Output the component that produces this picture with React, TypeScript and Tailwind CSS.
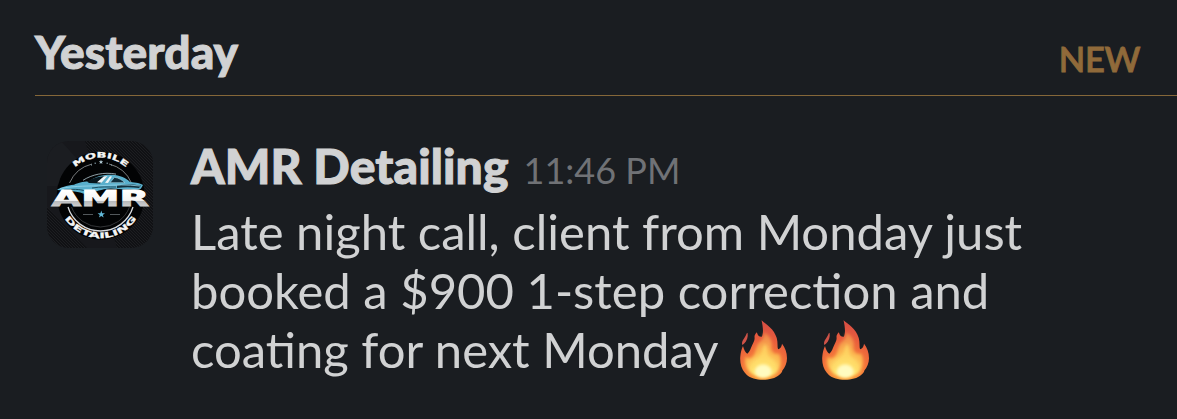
type Message = {
  author: string;
  time: string;
  lines: string[];
};

const message: Message = {
  author: 'AMR Detailing',
  time: '11:46 PM',
  lines: ['Late night call, client from Monday just', 'booked a $900 1-step correction and', 'coating for next Monday'],
};

function Fire({ id, className }: { id: string; className?: string }) {
  return (
    <svg viewBox="30 30 142 180" className={`h-[60px] w-[47px] shrink-0 ${className ?? ''}`} role="img" aria-label="fire">
      <defs>
        <radialGradient id={`${id}-outer`} gradientUnits="userSpaceOnUse" cx="100" cy="190" r="150">
          <stop offset="0" stopColor="#ffb43c" />
          <stop offset="0.4" stopColor="#f4793a" />
          <stop offset="0.7" stopColor="#e85c3c" />
          <stop offset="1" stopColor="#d94f43" />
        </radialGradient>
        <radialGradient id={`${id}-inner`} gradientUnits="userSpaceOnUse" cx="100" cy="190" r="125">
          <stop offset="0" stopColor="#ffffc8" />
          <stop offset="0.2" stopColor="#fff07a" />
          <stop offset="0.5" stopColor="#fcb850" />
          <stop offset="1" stopColor="#ee7c48" />
        </radialGradient>
        <filter id={`${id}-soft`} x="-30%" y="-30%" width="160%" height="160%">
          <feGaussianBlur stdDeviation="5" />
        </filter>
      </defs>
      <path
        fill={`url(#${id}-outer)`}
        d="M95 30C108 42 133 55 141 84C145 98 142 111 145 118C153 116 156 108 157 101C166 113 172 126 172 145C172 160 166 172 158 182C157 187 154 191 149 195C137 206 119 210 99 210C79 210 61 205 50 195L44 188C34 176 29 158 31 139C32 127 35 117 39 108C42 119 46 127 52 131C60 125 62 116 67 105C71 96 75 91 74 82C73 76 76 71 81 66C83 76 89 81 96 80C102 68 99 47 95 30Z"
      />
      <path fill="#cf5348" d="M53 68C55 81 51 93 42 101L37 105C33 90 45 86 50 70Z" />
      <path
        filter={`url(#${id}-soft)`}
        fill={`url(#${id}-inner)`}
        d="M102 67C121 75 128 93 125 110C123 124 132 134 148 131C157 145 155 174 141 188C129 203 75 203 61 187C47 174 42 156 47 140C55 149 68 145 74 132C81 116 79 104 91 95C101 87 103 77 102 67Z"
      />
      <path
        filter={`url(#${id}-soft)`}
        fill="#ffdc68"
        opacity="0.7"
        d="M106 101C117 116 109 130 120 145C132 157 141 157 137 173C129 201 73 203 65 177C61 160 79 158 88 142C97 127 96 113 106 101Z"
      />
      <ellipse cx="100" cy="184" rx="25" ry="20" fill="#fffbc0" filter={`url(#${id}-soft)`} />
    </svg>
  );
}

function Avatar() {
  return (
    <svg viewBox="0 0 106 107" className="h-[107px] w-[106px] shrink-0 rounded-[22px]" role="img" aria-label="AMR Mobile Detailing">
      <defs>
        <pattern id="carbon" width="3" height="3" patternUnits="userSpaceOnUse">
          <rect width="3" height="3" fill="#101114" />
          <path d="M0 0L3 3" stroke="#222427" strokeWidth="0.7" />
        </pattern>
        <linearGradient id="silver" x1="0" y1="0" x2="0" y2="1">
          <stop offset="0.2" stopColor="#ffffff" />
          <stop offset="0.58" stopColor="#f5f5f5" />
          <stop offset="0.62" stopColor="#b9babc" />
          <stop offset="1" stopColor="#dedede" />
        </linearGradient>
        <path id="arc-top" d="M15.7 54.7A38 38 0 0 1 91.7 54.7" />
        <path id="arc-bottom" d="M11.2 54.7A42.5 42.5 0 0 0 96.2 54.7" />
      </defs>
      <rect width="106" height="107" fill="#17181c" />
      <path d="M38 0H106V107H70Z" fill="url(#carbon)" />
      <path d="M0 0H14L32 20L10 45H0Z" fill="#1b1d21" />
      <path d="M0 66L40 107H0Z" fill="url(#carbon)" />
      <circle cx="53.7" cy="54.7" r="44" fill="#020304" />
      <path d="M22.5 42A33 33 0 0 1 45 23M62 23A33 33 0 0 1 84.5 42" fill="none" stroke="#96999c" strokeWidth="0.8" />
      <path d="M21 66A34 34 0 0 0 86 66" fill="none" stroke="#d7dadd" strokeWidth="1.3" />
      <path d="M24.5 66A31 31 0 0 0 82.5 66" fill="none" stroke="#66696c" strokeWidth="0.5" />
      <text className="font-['DejaVu_Sans'] font-bold" fill="#f5f5f5" stroke="#f5f5f5" strokeWidth="0.3" fontSize="7.6">
        <textPath href="#arc-top" startOffset="31.5" textLength="56" lengthAdjust="spacingAndGlyphs">
          MOBILE
        </textPath>
      </text>
      <text className="font-['DejaVu_Sans'] font-bold" fill="#f5f5f5" stroke="#f5f5f5" strokeWidth="0.3" fontSize="7.8">
        <textPath href="#arc-bottom" startOffset="24" textLength="85" lengthAdjust="spacingAndGlyphs">
          DETAILING
        </textPath>
      </text>
      <path d="M54 18.7L54.6 20.2L56.2 20.3L55 21.3L55.4 23L54 22.1L52.6 23L53 21.3L51.8 20.3L53.4 20.2Z" fill="#b2cbd5" />
      <path d="M47.5 22.2H49M59.5 22.2H61M44 24H45M64 24H65" stroke="#8ca6b0" />
      {/* car body */}
      <path
        d="M10 49C13 46.5 20 44.5 27 43.8C31 41.8 35 40.8 42 40.3C48 36 54 33.5 65 33.7C73 34 79 37 83 41C89 41.4 94 42.5 96 44L94 47.5C91 50 86 48 82 48.5C74 49 66 46.5 57 48.2C48 50 44 54 36 52.4C29 50 21 50 10 49Z"
        fill="#59afcc"
      />
      <path d="M40 40.5C47 36.7 51 35.2 60 35.2L53 42.5L42 42Z" fill="#07151c" />
      <path d="M50 41.3L57 35.3L60.5 35L54.5 41.8ZM58 41.8L63 35.2L65 35.4L61 42Z" fill="#edf4f6" />
      <path d="M63 41.7L67.5 36.3C72 37 75 39 78 41.7Z" fill="#102e3b" stroke="#a8dced" strokeWidth="0.6" />
      <path d="M70 44.5C78 43 87 43 94 44.5L92 47C84 46 77 46 70 47Z" fill="#12303c" />
      <path d="M13 47.5C29 44.5 43 45.3 57 44.5C69 43.8 80 43.5 93 45" fill="none" stroke="#9ad7eb" strokeWidth="0.8" />
      <path d="M17 49C25 48 33 48 38 50M45 47C54 45.5 62 46 69 46" fill="none" stroke="#174354" strokeWidth="0.9" />
      <path d="M36 39.3C45 33.5 57 30.8 69 33.1" fill="none" stroke="#cde7ef" strokeWidth="0.7" />
      <text
        x="4.5"
        y="64.5"
        textLength="97.5"
        lengthAdjust="spacingAndGlyphs"
        className="font-['DejaVu_Sans'] font-bold"
        fill="url(#silver)"
        stroke="url(#silver)"
        strokeWidth="0.8"
        fontSize="20.8"
      >
        AMR
      </text>
      <path d="M54.3 69.6L55.2 72.2H58L55.8 73.9L56.7 76.6L54.3 75L51.9 76.6L52.8 73.9L50.6 72.2H53.4Z" fill="#62b9d8" />
      <path d="M36 73.5H46M63 73.5H73" stroke="#686e72" strokeWidth="0.8" />
    </svg>
  );
}

export default function App() {
  return (
    <main className="flex h-[419px] w-full flex-col overflow-hidden bg-[#1a1d21] font-['Lato',sans-serif] text-[#d1d2d3]">
      <header className="ml-[35px] flex h-24 items-start justify-between border-b border-b-[#856739] pt-[22px] pr-[37px]">
        <h2 className="text-[46px] leading-[60px] font-black tracking-[0.1px] [-webkit-text-stroke:1px_#d1d2d3]">Yesterday</h2>
        <span className="pt-4 text-[34.5px] leading-[42px] font-semibold tracking-[-0.4px] text-[#906a3a] [-webkit-text-stroke:0.8px_#906a3a]">
          NEW
        </span>
      </header>

      <article className="flex gap-[38px] pt-[45px] pl-[47px]">
        <Avatar />
        <div className="whitespace-nowrap">
          <div className="flex h-[61px] items-baseline gap-[15px]">
            <h3 className="text-[48px] leading-[50px] font-black tracking-[0.1px] [-webkit-text-stroke:1px_#d1d2d3]">{message.author}</h3>
            <time className="text-[36px] text-[#707276]">{message.time}</time>
          </div>
          <div className="text-[49px] leading-[59px]">
            {message.lines.map((line, index) => (
              <div key={line} className="flex h-[59px] items-center">
                <span>{line}</span>
                {index === message.lines.length - 1 && (
                  <>
                    <Fire id="fire-one" className="ml-[21px]" />
                    <Fire id="fire-two" className="ml-[35px]" />
                  </>
                )}
              </div>
            ))}
          </div>
        </div>
      </article>
    </main>
  );
}
